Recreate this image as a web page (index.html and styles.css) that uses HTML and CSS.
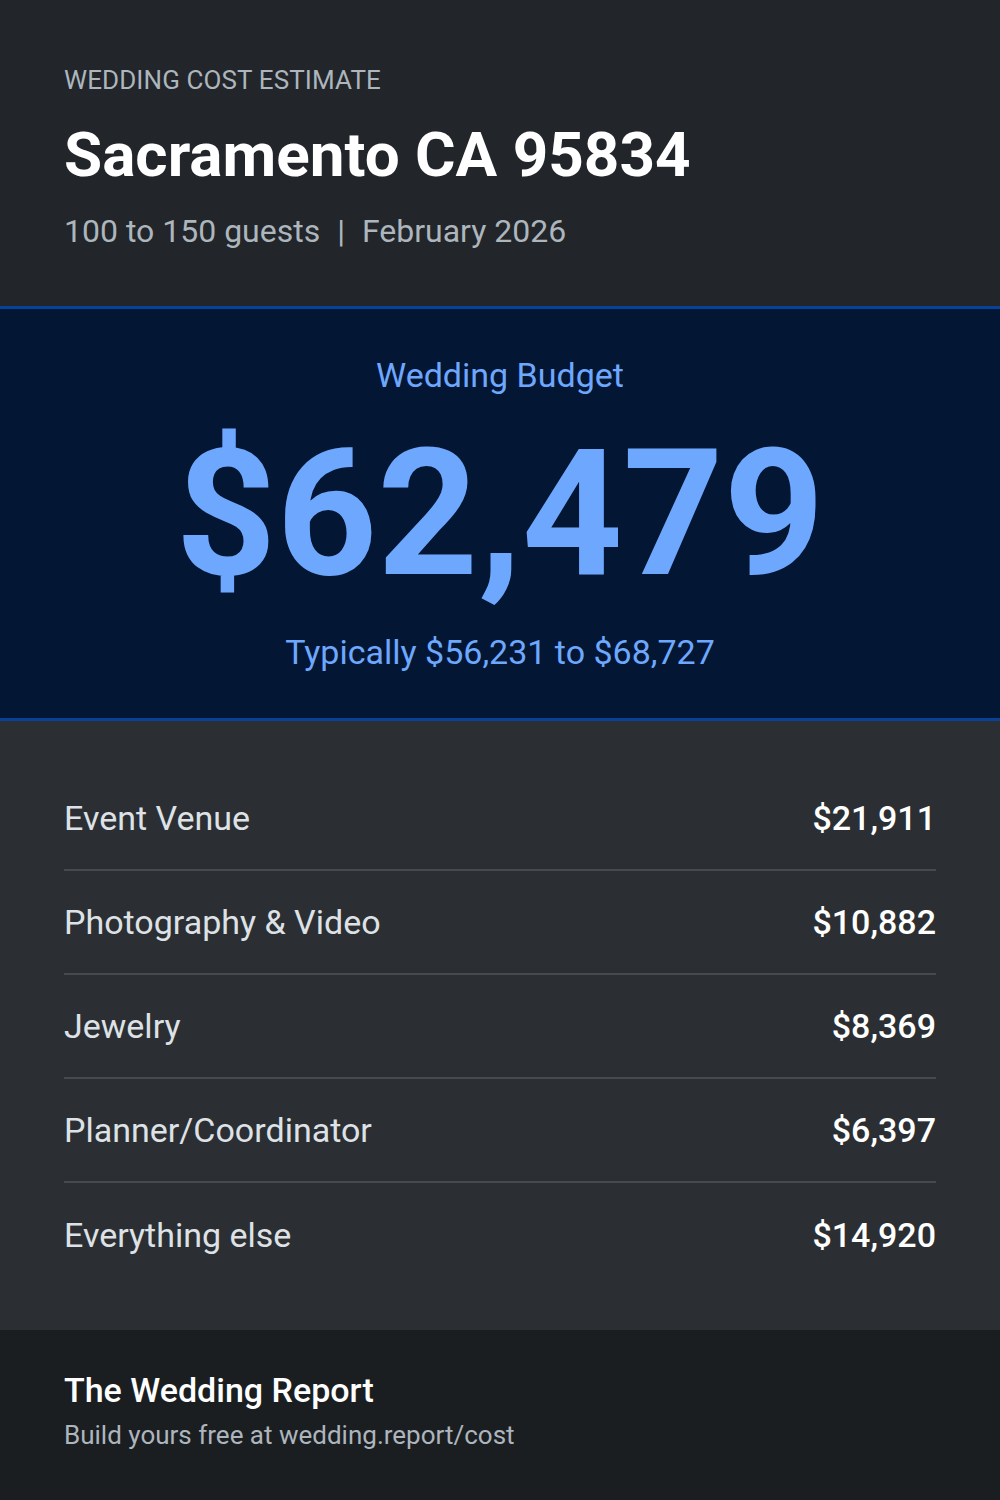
FILE: index.html
```html
<!DOCTYPE html>
<html lang="en">
  <head>
    <meta charset="UTF-8" />
    <meta name="viewport" content="width=device-width, initial-scale=1.0" />
    <title>Wedding Cost Estimate</title>
    <link rel="stylesheet" href="styles.css">
  </head>
  <body>
    <div class="card">
      <div class="header">
        <div class="eyebrow">WEDDING COST ESTIMATE</div>
        <h1 class="title">Sacramento CA 95834</h1>
        <div class="meta">100 to 150 guests <span class="sep">|</span> February 2026</div>
      </div>
      <div class="hero">
        <div class="hero-label">Wedding Budget</div>
        <div class="hero-total">$62,479</div>
        <div class="hero-range">Typically $56,231 to $68,727</div>
      </div>
      <ul class="lines">
        <li><span class="name">Event Venue</span><span class="cost">$21,911</span></li>
        <li><span class="name">Photography &amp; Video</span><span class="cost">$10,882</span></li>
        <li><span class="name">Jewelry</span><span class="cost">$8,369</span></li>
        <li><span class="name">Planner/Coordinator</span><span class="cost">$6,397</span></li>
        <li><span class="name">Everything else</span><span class="cost">$14,920</span></li>
      </ul>
      <div class="footer">
        <div class="brand">The Wedding Report</div>
        <div class="cta">Build yours free at wedding.report/cost</div>
      </div>
    </div>
  </body>
</html>
```

FILE: styles.css
```css
* {
  margin: 0;
  padding: 0;
  list-style: none;
  box-sizing: border-box;
}
body {
  font-family: Roboto, "Liberation Sans", sans-serif;
  background: #1b1e21;
}
.card {
  width: 1000px;
  height: 1500px;
  display: flex;
  flex-direction: column;
}
.header {
  height: 306px;
  background: #222529;
  padding: 62px 64px 0;
}
.eyebrow {
  font-size: 26px;
  line-height: 36px;
  color: #adb5bd;
  letter-spacing: 0.1px;
}
.title {
  margin-top: 19px;
  font-size: 62px;
  line-height: 76px;
  font-weight: 700;
  color: #fff;
}
.meta {
  margin-top: 18px;
  font-size: 32px;
  line-height: 40px;
  color: #adb5bd;
}
.meta .sep {
  margin: 0 9px;
}
.hero {
  height: 415px;
  background: #031633;
  border-top: 3px solid #084298;
  border-bottom: 3px solid #084298;
  text-align: center;
  color: #6ea8fe;
  padding-top: 46px;
}
.hero-label {
  font-size: 34px;
  line-height: 40px;
}
.hero-total {
  margin-top: 14px;
  font-size: 176px;
  line-height: 210px;
  font-weight: 700;
}
.hero-range {
  margin-top: 13px;
  font-size: 34px;
  line-height: 40px;
}
.lines {
  flex: 1;
  background: #2b2f33;
  padding: 46px 64px 0;
}
.lines li {
  display: flex;
  justify-content: space-between;
  align-items: center;
  height: 104px;
  border-bottom: 2px solid #454a50;
  font-size: 34px;
}
.lines li:last-child {
  border-bottom: 0;
}
.name {
  color: #dee2e6;
}
.cost {
  color: #fff;
  font-weight: 500;
}
.footer {
  height: 170px;
  background: #1b1e21;
  padding: 40px 64px 0;
}
.brand {
  font-size: 34px;
  line-height: 40px;
  font-weight: 500;
  color: #fff;
}
.cta {
  margin-top: 8px;
  font-size: 26px;
  line-height: 34px;
  color: #adb5bd;
}
```
